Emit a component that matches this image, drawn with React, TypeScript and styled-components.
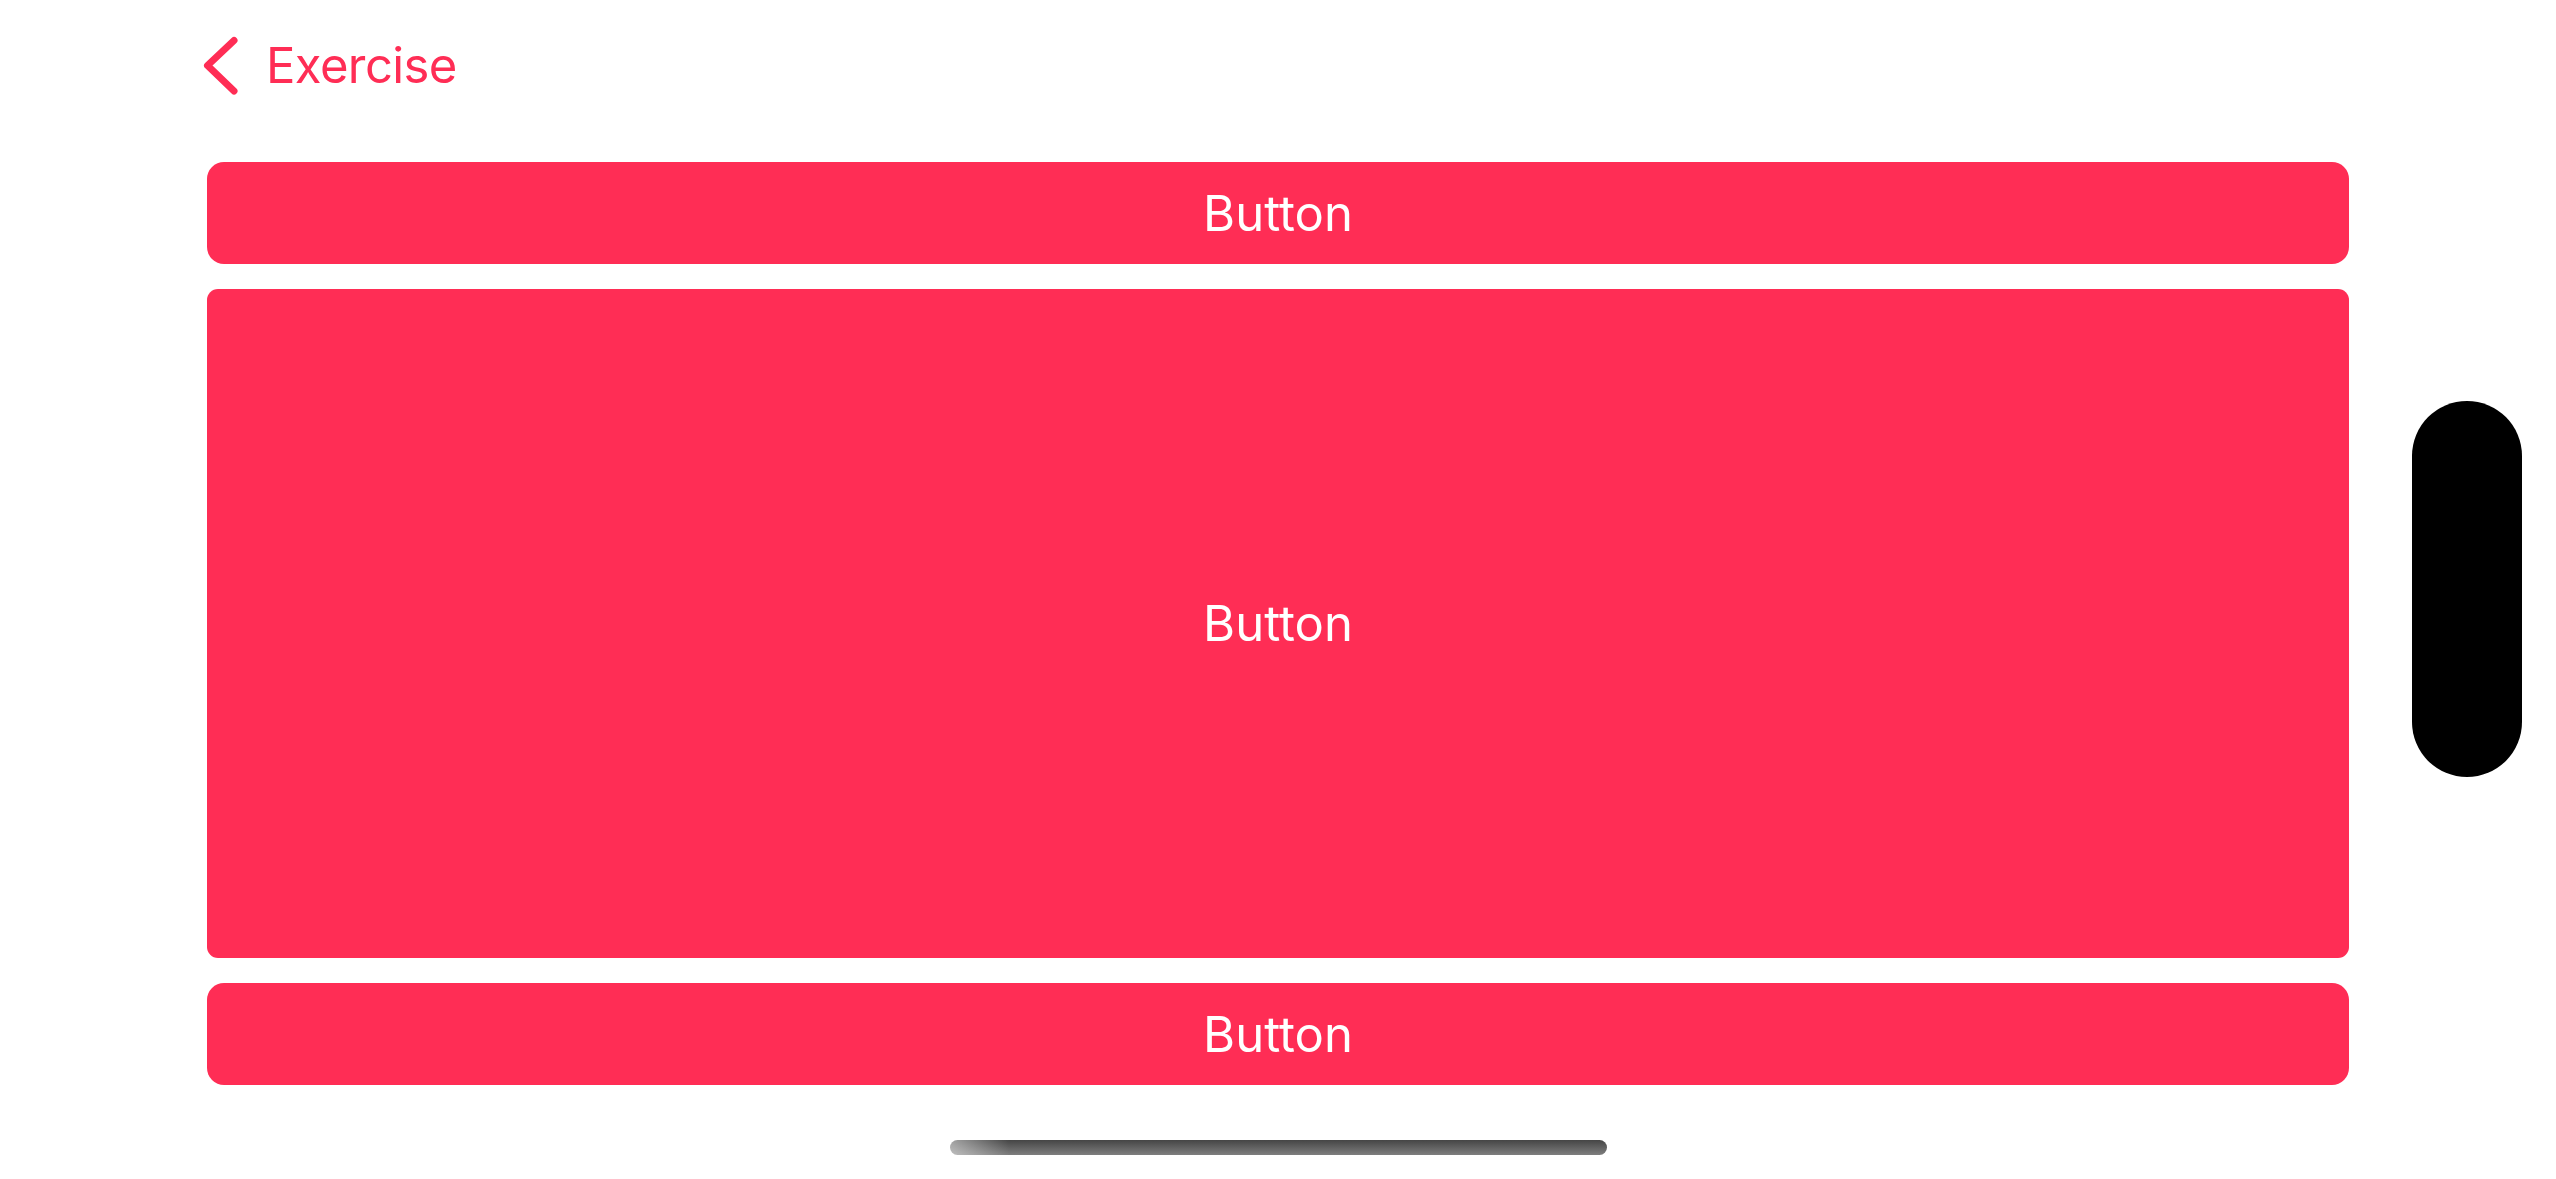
import React from 'react';
import styled, { createGlobalStyle } from 'styled-components';

const GlobalStyle = createGlobalStyle`
  html, body {
    margin: 0;
    padding: 0;
    background: #ffffff;
  }
  body {
    font-family: Inter, "Noto Sans", sans-serif;
  }
`;

const Screen = styled.div`
  position: relative;
  width: 2556px;
  height: 1179px;
  overflow: hidden;
  background: #ffffff;
`;

const Content = styled.div`
  display: flex;
  flex-direction: column;
  width: 2142px;
  padding-left: 207px;
`;

const NavBar = styled.div`
  height: 131px;
  display: flex;
  align-items: center;
`;

const BackButton = styled.button`
  display: flex;
  align-items: center;
  gap: 27px;
  margin-left: -4px;
  padding: 0;
  border: none;
  background: none;
  color: #ff2d55;
  font-family: Inter, "Noto Sans", sans-serif;
  font-size: 49px;
  font-weight: 400;
  letter-spacing: -0.6px;
  cursor: pointer;
`;

const Stack = styled.div`
  margin-top: 31px;
  display: flex;
  flex-direction: column;
  gap: 25px;
`;

const PinkButton = styled.button<{ $height: number; $radius: number }>`
  height: ${(p) => p.$height}px;
  width: 100%;
  display: flex;
  align-items: center;
  justify-content: center;
  border: none;
  border-radius: ${(p) => p.$radius}px;
  background: #ff2d55;
  color: #ffffff;
  font-family: Inter, "Noto Sans", sans-serif;
  font-size: 49px;
  font-weight: 400;
  padding: 0;
  cursor: pointer;
`;

const SidePill = styled.div`
  position: absolute;
  left: 2412px;
  top: 401px;
  width: 110px;
  height: 376px;
  border-radius: 55px;
  background: #000000;
`;

const HomeIndicator = styled.div`
  position: absolute;
  left: 950px;
  top: 1140px;
  width: 657px;
  height: 15px;
  border-radius: 8px;
  background:
    linear-gradient(90deg, rgba(255, 255, 255, 0.5) 0%, rgba(255, 255, 255, 0) 9%),
    linear-gradient(180deg, #454545 0%, #7e7e7e 100%);
`;

const Chevron = () => (
  <svg width="36" height="60" viewBox="0 0 36 60">
    <path
      d="M31 4.5 L4.5 29.5 L31 55"
      fill="none"
      stroke="#ff2d55"
      strokeWidth="7"
      strokeLinecap="round"
      strokeLinejoin="round"
    />
  </svg>
);

const buttons = [
  { height: 102, radius: 17 },
  { height: 669, radius: 11 },
  { height: 102, radius: 17 },
];

export default function App() {
  return (
    <Screen>
      <GlobalStyle />
      <Content>
        <NavBar>
          <BackButton>
            <Chevron />
            Exercise
          </BackButton>
        </NavBar>
        <Stack>
          {buttons.map((b, i) => (
            <PinkButton key={i} $height={b.height} $radius={b.radius}>
              Button
            </PinkButton>
          ))}
        </Stack>
      </Content>
      <SidePill />
      <HomeIndicator />
    </Screen>
  );
}
